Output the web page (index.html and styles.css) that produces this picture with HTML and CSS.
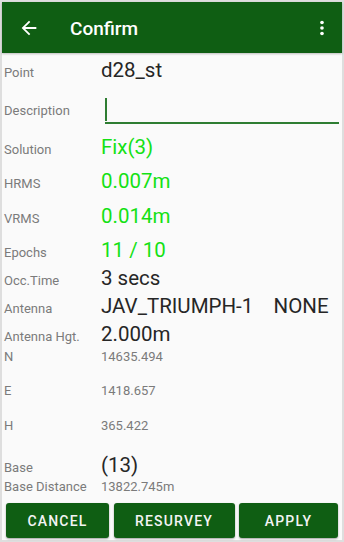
FILE: index.html
```html
<!DOCTYPE html>
<html>
<head>
<meta charset="utf-8">
<link rel="stylesheet" href="styles.css">
</head>
<body>
<div class="screen">
  <header class="appbar">
    <svg class="icon back" viewBox="0 0 24 24"><path d="M20 11H7.83l5.59-5.59L12 4l-8 8 8 8 1.41-1.41L7.83 13H20v-2z"/></svg>
    <h1 class="title">Confirm</h1>
    <svg class="icon more" viewBox="0 0 24 24"><circle cx="12" cy="6" r="2"/><circle cx="12" cy="12" r="2"/><circle cx="12" cy="18" r="2"/></svg>
  </header>
  <main class="content">
    <div class="row r36"><span class="label">Point</span><span class="value">d28_st</span></div>
    <div class="row desc"><span class="label">Description</span><div class="input"><span class="cursor"></span></div></div>
    <div class="row r34"><span class="label">Solution</span><span class="value green">Fix(3)</span></div>
    <div class="row r34h"><span class="label">HRMS</span><span class="value green">0.007m</span></div>
    <div class="row r34"><span class="label">VRMS</span><span class="value green">0.014m</span></div>
    <div class="row r28h"><span class="label">Epochs</span><span class="value green">11 / 10</span></div>
    <div class="row r28"><span class="label">Occ.Time</span><span class="value">3 secs</span></div>
    <div class="row r28"><span class="label">Antenna</span><span class="value">JAV_TRIUMPH-1    NONE</span></div>
    <div class="row r26"><span class="label">Antenna Hgt.</span><span class="value">2.000m</span></div>
    <div class="row r34"><span class="label">N</span><span class="small">14635.494</span></div>
    <div class="row r34h"><span class="label">E</span><span class="small">1418.657</span></div>
    <div class="row r36"><span class="label">H</span><span class="small">365.422</span></div>
    <div class="row r25"><span class="label">Base</span><span class="value">(13)</span></div>
    <div class="row"><span class="label">Base Distance</span><span class="small">13822.745m</span></div>
  </main>
  <footer class="actions">
    <button class="btn btn-cancel">CANCEL</button>
    <button class="btn btn-resurvey">RESURVEY</button>
    <button class="btn btn-apply">APPLY</button>
  </footer>
</div>
</body>
</html>
```
FILE: styles.css
```css
html, body {
  margin: 0;
  padding: 0;
}
body {
  background: #dedede;
  font-family: Roboto, "Liberation Sans", sans-serif;
  width: 344px;
  height: 542px;
  overflow: hidden;
}
.screen {
  margin: 2px;
  width: 340px;
  height: 538px;
  background: #fafafa;
  display: flex;
  flex-direction: column;
}
.appbar {
  height: 51px;
  flex: none;
  background: #0f5e13;
  display: flex;
  align-items: center;
  padding: 0 9px 0 16px;
  box-shadow: 0 1px 2px rgba(0,0,0,0.25);
}
.icon {
  width: 22px;
  height: 22px;
  fill: #ffffff;
  flex: none;
}
.title {
  margin: 0 0 0 30px;
  flex: 1;
  color: #ffffff;
  font-size: 19px;
  font-weight: 500;
  line-height: 1;
  padding-top: 1px;
}
.content {
  flex: 1;
  padding: 7px 0 0 2px;
}
.row {
  display: flex;
  align-items: baseline;
}
.r36 { height: 36px; }
.r34 { height: 34px; }
.r34h { height: 34.5px; }
.r28h { height: 28.5px; }
.r28 { height: 28px; }
.r26 { height: 26.4px; }
.r25 { height: 25.6px; }
.label {
  width: 97px;
  flex: none;
  font-size: 13px;
  line-height: 13px;
  color: #7b7b7b;
}
.value {
  font-size: 20.5px;
  line-height: 20px;
  color: #262626;
  white-space: pre;
}
.value.green {
  color: #14e114;
}
.small {
  font-size: 13px;
  line-height: 13px;
  color: #7b7b7b;
}
.desc {
  align-items: center;
  height: 28px;
  margin-bottom: 13px;
}
.input {
  margin-left: 4px;
  width: 234px;
  height: 26px;
  border-bottom: 2px solid #2e7d32;
  display: flex;
  align-items: flex-start;
}
.cursor {
  width: 2px;
  height: 23px;
  margin-top: 2px;
  background: #2e7d32;
}
.actions {
  flex: none;
  display: flex;
  gap: 4.5px;
  padding: 0 5px 2px 4px;
}
.btn {
  flex: none;
  height: 35px;
  border: none;
  border-radius: 3px;
  background: #0f5e13;
  color: #f4f4f4;
  font-family: Roboto, "Liberation Sans", sans-serif;
  font-size: 14px;
  font-weight: 500;
  letter-spacing: 1.2px;
  box-shadow: 0 1px 2px rgba(0,0,0,0.35);
  padding: 0;
}
.btn-cancel { width: 103px; }
.btn-resurvey { width: 121px; }
.btn-apply { width: 99px; }
```
